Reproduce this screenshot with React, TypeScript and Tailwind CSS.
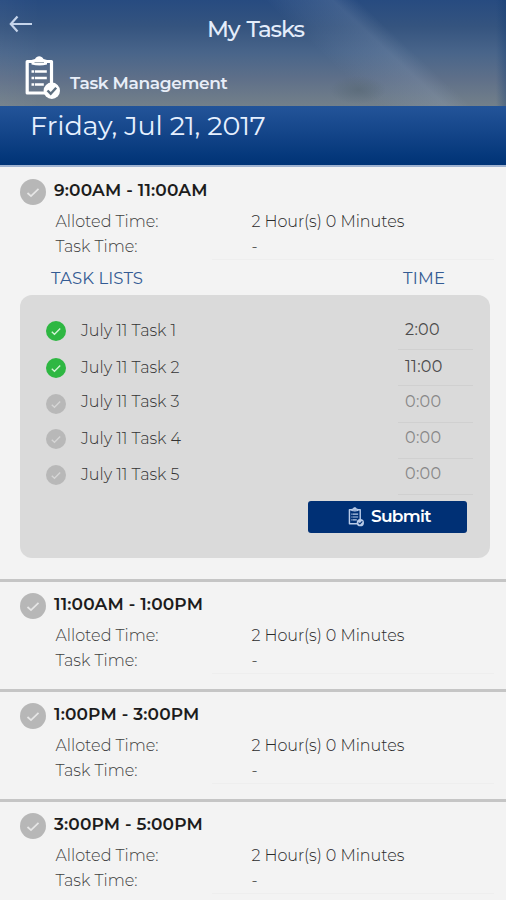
import clsx from 'clsx';

type Task = { name: string; time: string; done: boolean; height: string; textPad: string; iconPad: string };

const tasks: Task[] = [
  { name: 'July 11 Task 1', time: '2:00', done: true, height: 'h-9', textPad: 'pb-[3px]', iconPad: 'pb-0.5' },
  { name: 'July 11 Task 2', time: '11:00', done: true, height: 'h-9', textPad: 'pb-px', iconPad: 'pb-0' },
  { name: 'July 11 Task 3', time: '0:00', done: false, height: 'h-[37px]', textPad: 'pb-[5px]', iconPad: 'pb-0.5' },
  { name: 'July 11 Task 4', time: '0:00', done: false, height: 'h-9', textPad: 'pb-[5px]', iconPad: 'pb-1' },
  { name: 'July 11 Task 5', time: '0:00', done: false, height: 'h-9', textPad: 'pb-[5px]', iconPad: 'pb-1' },
];

const slots = ['11:00AM - 1:00PM', '1:00PM - 3:00PM', '3:00PM - 5:00PM'];

function CheckCircle({ className, fill, stroke }: { className: string; fill: string; stroke: string }) {
  return (
    <svg viewBox="0 0 26 26" className={className} fill="none">
      <circle cx="13" cy="13" r="13" fill={fill} />
      <path d="M7.5 14l3.5 3.2L18.5 9.8" stroke={stroke} strokeWidth="1.7" />
    </svg>
  );
}

function ClipboardIcon({ className, check }: { className: string; check: string }) {
  return (
    <svg viewBox="0 0 36 44" className={className} fill="none">
      <path d="M3.200 5.500h24.300v31.500H3.200z" stroke="currentColor" strokeWidth="3.200" strokeLinejoin="round" />
      <path d="M7.500 8.500V4L11 3c1-2 2.500-2.800 4.200-2.800S18.500 1 19.500 3l3.500 1v4.500q-7.500 2-15.500 0z" fill="currentColor" />
      <path d="M10.500 6.500h9.500" stroke={check} strokeWidth="1" strokeOpacity="0.600" />
      <path d="M7.500 15.500h2.500M7.500 22h2.500M7.500 28.500h2.500M10.800 15.500h12M10.800 22h12M10.800 28.500h9" stroke="currentColor" strokeWidth="2.600" />
      <circle cx="27.800" cy="34.800" r="8.200" fill="currentColor" />
      <path d="M23.500 34.500l3.200 3.200 5.500-6" stroke={check} strokeWidth="2.400" />
    </svg>
  );
}

function SlotInfo({ label }: { label: string }) {
  return (
    <div className="pt-[11px]">
      <div className="flex h-[26px] pl-5">
        <CheckCircle className="size-[26px] shrink-0" fill="#b7b7b7" stroke="#e6e6e6" />
        <h2 className="ml-2 text-[17px] leading-[22px] font-semibold tracking-[0.15px] whitespace-nowrap text-[#1c1c1c]">
          {label}
        </h2>
      </div>
      <div className="mt-1 flex h-[25px] items-center pl-[55.5px] text-[16px] font-light text-[#404040]">
        <span className="w-[196px]">Alloted Time:</span>
        <span className="tracking-[-0.05px] whitespace-nowrap text-[#2a2a2a]">2 Hour(s) 0 Minutes</span>
      </div>
      <div className="flex h-[25px] items-center pl-[55.5px] text-[16px] font-light text-[#404040]">
        <span className="w-[196px]">Task Time:</span>
        <span>-</span>
      </div>
      <div className="mr-3 ml-[212px] h-px bg-[#eeeeee]" />
    </div>
  );
}

export default function App() {
  return (
    <div className="h-[900px] w-full overflow-hidden bg-[#f3f3f3] font-['Montserrat','Inter',sans-serif]">
      <header className="h-[106px] bg-[radial-gradient(ellipse_28px_14px_at_358px_90px,#56677399,transparent),linear-gradient(90deg,#ffffff08,transparent_8%,transparent_98%,#103a7055),linear-gradient(43deg,transparent_61%,#8fa4c418_65%,#9eb0cb30_72%,transparent_76%),linear-gradient(180deg,#274b80_0%,#35547f_25%,#49658a_50%,#5f7089_75%,#73808a_100%)]">
        <div className="flex h-[54px] pt-[15px]">
          <button type="button" className="h-[18px] w-[33px] pl-[9px]">
            <svg viewBox="0 0 24 18" className="h-[18px] w-6" fill="none" stroke="#c6d5eb" strokeWidth="2.200">
              <path d="M8.500 1.500L1.800 9l6.700 7.500M2 9h21" />
            </svg>
          </button>
          <h1 className="flex-1 pl-[174px] text-[23px] leading-7 font-medium tracking-[-1.2px] text-[#e4edfb] [word-spacing:2px]">
            My Tasks
          </h1>
        </div>
        <div className="flex pl-6 text-white">
          <ClipboardIcon className="mt-0.5 h-11 w-9" check="#5e7080" />
          <h2 className="ml-2.5 pt-[17px] text-[17px] leading-6 font-semibold tracking-[-0.35px] text-[#e8eef8]">Task Management</h2>
        </div>
      </header>

      <div className="h-[61px] border-b-2 border-[#9fb2d0] bg-linear-to-b from-[#235499] to-[#003376] pl-[30px] text-[27px] leading-[40px] tracking-[-0.1px] text-[#e6f0ff]">
        Friday, Jul 21, 2017
      </div>

      <section className="h-[415px] border-b-[3px] border-[#c5c5c5] pt-px">
        <SlotInfo label="9:00AM - 11:00AM" />
        <div className="mt-2 flex h-5 items-center pl-[51px] text-[16.5px] text-[#345b93]">
          <span className="w-[352px] tracking-[0.1px]">TASK LISTS</span>
          <span className="tracking-[0.3px]">TIME</span>
        </div>
        <div className="mt-[7px] mr-4 ml-5 h-[263px] rounded-xl bg-[#dadada] pt-[19px]">
          {tasks.map((task) => (
            <div key={task.name} className={clsx('flex pl-[26px] text-[16px] font-light', task.height)}>
              <div className={clsx('flex items-center', task.iconPad)}>
                <CheckCircle
                  className="size-5"
                  fill={task.done ? '#2eb742' : '#b8b8b8'}
                  stroke={task.done ? '#d5f5d8' : '#d6d6d6'}
                />
              </div>
              <span className={clsx('flex w-[332px] items-center pl-[15px] text-[#333333]', task.textPad)}>{task.name}</span>
              <span
                className={clsx(
                  'flex w-[75px] items-center border-b border-[#d0d0d0] pl-[7px] font-normal tracking-[0.3px] last:border-[#d0d0d0]',
                  task.textPad,
                  task.done ? 'text-[#4c4c4c]' : 'text-[#888888]',
                )}
              >
                {task.time}
              </span>
            </div>
          ))}
          <button
            type="button"
            className="mt-1.5 ml-[288px] flex h-8 w-[159px] items-center rounded-[3px] bg-[#003075] pl-10 text-[17px] font-semibold text-white"
          >
            <ClipboardIcon className="h-5 w-4 text-[#b9cbe8]" check="#003075" />
            <span className="ml-[7px] tracking-[-0.7px]">Submit</span>
          </button>
        </div>
      </section>

      {slots.map((label) => (
        <section key={label} className="h-[110px] border-b-[3px] border-[#c5c5c5]">
          <SlotInfo label={label} />
        </section>
      ))}
    </div>
  );
}
